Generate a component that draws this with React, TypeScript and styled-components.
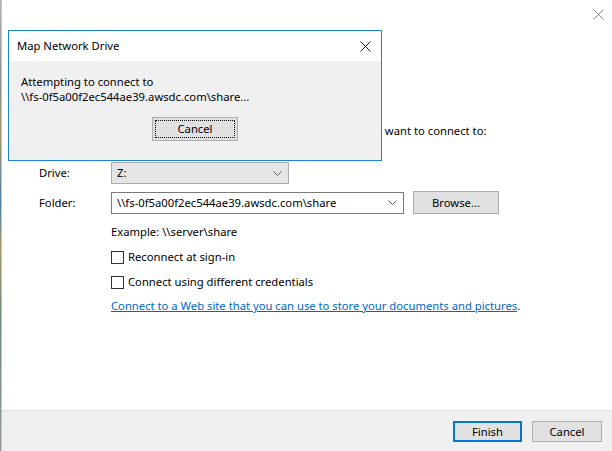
import React from 'react';
import styled, { createGlobalStyle, css } from 'styled-components';

const GlobalStyle = createGlobalStyle`
  html, body {
    margin: 0;
    padding: 0;
    width: 612px;
    height: 451px;
    overflow: hidden;
    background: #ffffff;
  }
  body {
    font-family: 'Noto Sans', 'Liberation Sans', sans-serif;
    font-size: 11.25px;
    color: #000000;
  }
  * {
    box-sizing: border-box;
  }
`;

const Screen = styled.div`
  position: relative;
  display: flex;
  width: 612px;
  height: 451px;
`;

const DesktopEdge = styled.div`
  width: 1px;
  background: linear-gradient(
    to bottom,
    #b8b8b8 0%,
    #8c8c8c 20%,
    #a89a6a 30%,
    #4a7ea8 45%,
    #a89a6a 55%,
    #6a8a7a 70%,
    #9a9a9a 100%
  );
`;

const Window = styled.div`
  flex: 1;
  display: flex;
  flex-direction: column;
  border-left: 1px solid #c4c4c4;
  background: #ffffff;
`;

const TopBar = styled.div`
  height: 28px;
  display: flex;
  justify-content: flex-end;
  align-items: center;
  padding-right: 8px;
`;

const Content = styled.div`
  flex: 1;
  padding: 0 0 0 37px;
  display: flex;
  flex-direction: column;
`;

const Instruction = styled.div`
  margin-top: 95px;
  line-height: 16px;
  white-space: nowrap;
`;

const Form = styled.div`
  margin-top: 23px;
  display: grid;
  grid-template-columns: 72px auto;
  row-gap: 7px;
  align-items: center;
`;

const Label = styled.div`
  line-height: 16px;
`;

const FieldRow = styled.div`
  display: flex;
  align-items: center;
  gap: 9px;
`;

const Combo = styled.div<{ $width: number; $editable?: boolean }>`
  flex: none;
  width: ${({ $width }) => $width}px;
  height: 22px;
  display: flex;
  align-items: center;
  justify-content: space-between;
  padding: 0 6px 0 5px;
  line-height: 16px;
  overflow: hidden;
  white-space: nowrap;
  ${({ $editable }) =>
    $editable
      ? css`
          background: #ffffff;
          border: 1px solid #7a7a7a;
        `
      : css`
          background: #e5e5e5;
          border: 1px solid #adadad;
        `}
`;

const Options = styled.div`
  margin-left: 72px;
  display: flex;
  flex-direction: column;
`;

const Example = styled.div`
  margin-top: 10px;
  line-height: 16px;
`;

const CheckRow = styled.label`
  margin-top: 9px;
  display: flex;
  align-items: center;
  gap: 4px;
  line-height: 16px;
`;

const Box = styled.span`
  width: 13px;
  height: 13px;
  border: 1px solid #333333;
  background: #ffffff;
`;

const LinkLine = styled.div`
  margin-top: 8px;
  line-height: 16px;
  white-space: nowrap;
`;

const Link = styled.a`
  color: #0066cc;
  text-decoration: underline;
`;

const Footer = styled.div`
  height: 41px;
  border-top: 1px solid #dfdfdf;
  background: #f0f0f0;
  display: flex;
  justify-content: flex-end;
  align-items: flex-start;
  gap: 10px;
  padding: 10px 10px 0 0;
`;

const Button = styled.button<{ $default?: boolean; $width: number; $height?: number }>`
  flex: none;
  width: ${({ $width }) => $width}px;
  height: ${({ $height }) => $height ?? 21}px;
  padding: 0;
  font: inherit;
  line-height: 16px;
  color: #000000;
  background: #e1e1e1;
  border: ${({ $default }) =>
    $default ? '2px solid #0078d7' : '1px solid #adadad'};
`;

const Dialog = styled.div`
  position: absolute;
  left: 8px;
  top: 30px;
  width: 374px;
  height: 131px;
  border: 1px solid #1883d7;
  display: flex;
  flex-direction: column;
  background: #f0f0f0;
`;

const DialogTitle = styled.div`
  height: 30px;
  background: #ffffff;
  display: flex;
  align-items: center;
  justify-content: space-between;
  padding: 0 10px 0 8px;
  line-height: 16px;
`;

const DialogBody = styled.div`
  flex: 1;
  display: flex;
  flex-direction: column;
  padding: 13px 12px 0;
`;

const Message = styled.div`
  line-height: 15px;
`;

const ButtonBar = styled.div`
  margin-top: 13px;
  display: flex;
  justify-content: center;
`;

const FocusButton = styled.button`
  width: 86px;
  height: 24px;
  padding: 2px;
  font: inherit;
  color: #000000;
  background: #e1e1e1;
  border: 1px solid #adadad;
`;

const FocusRing = styled.span`
  display: flex;
  align-items: center;
  justify-content: center;
  height: 100%;
  border: 1px dotted #000000;
  line-height: 16px;
`;

const Chevron = () => (
  <svg width="9" height="5" viewBox="0 0 9 5">
    <path d="M0.5 0.5 L4.5 4.5 L8.5 0.5" fill="none" stroke="#606060" strokeWidth="1" />
  </svg>
);

const CloseGlyph = ({ color }: { color: string }) => (
  <svg width="11" height="11" viewBox="0 0 11 11">
    <path d="M0.5 0.5 L10.5 10.5 M10.5 0.5 L0.5 10.5" stroke={color} strokeWidth="1" />
  </svg>
);

const App = () => {
  return (
    <>
      <GlobalStyle />
      <Screen>
        <DesktopEdge />
        <Window>
          <TopBar>
            <CloseGlyph color="#8a8a8a" />
          </TopBar>
          <Content>
            <Instruction>
              Specify the drive letter for the connection and the folder that you
              want to connect to:
            </Instruction>
            <Form>
              <Label>Drive:</Label>
              <Combo $width={178}>
                <span>Z:</span>
                <Chevron />
              </Combo>
              <Label>Folder:</Label>
              <FieldRow>
                <Combo $width={293} $editable>
                  <span>\\fs-0f5a00f2ec544ae39.awsdc.com\share</span>
                  <Chevron />
                </Combo>
                <Button $width={86} $height={23}>
                  Browse...
                </Button>
              </FieldRow>
            </Form>
            <Options>
              <Example>Example: \\server\share</Example>
              <CheckRow>
                <Box />
                Reconnect at sign-in
              </CheckRow>
              <CheckRow>
                <Box />
                Connect using different credentials
              </CheckRow>
              <LinkLine>
                <Link>
                  Connect to a Web site that you can use to store your documents and
                  pictures
                </Link>
                .
              </LinkLine>
            </Options>
          </Content>
          <Footer>
            <Button $width={69} $default>
              Finish
            </Button>
            <Button $width={70}>Cancel</Button>
          </Footer>
        </Window>
        <Dialog>
          <DialogTitle>
            <span>Map Network Drive</span>
            <CloseGlyph color="#1a1a1a" />
          </DialogTitle>
          <DialogBody>
            <Message>
              Attempting to connect to
              <br />
              \\fs-0f5a00f2ec544ae39.awsdc.com\share...
            </Message>
            <ButtonBar>
              <FocusButton>
                <FocusRing>Cancel</FocusRing>
              </FocusButton>
            </ButtonBar>
          </DialogBody>
        </Dialog>
      </Screen>
    </>
  );
};

export default App;
